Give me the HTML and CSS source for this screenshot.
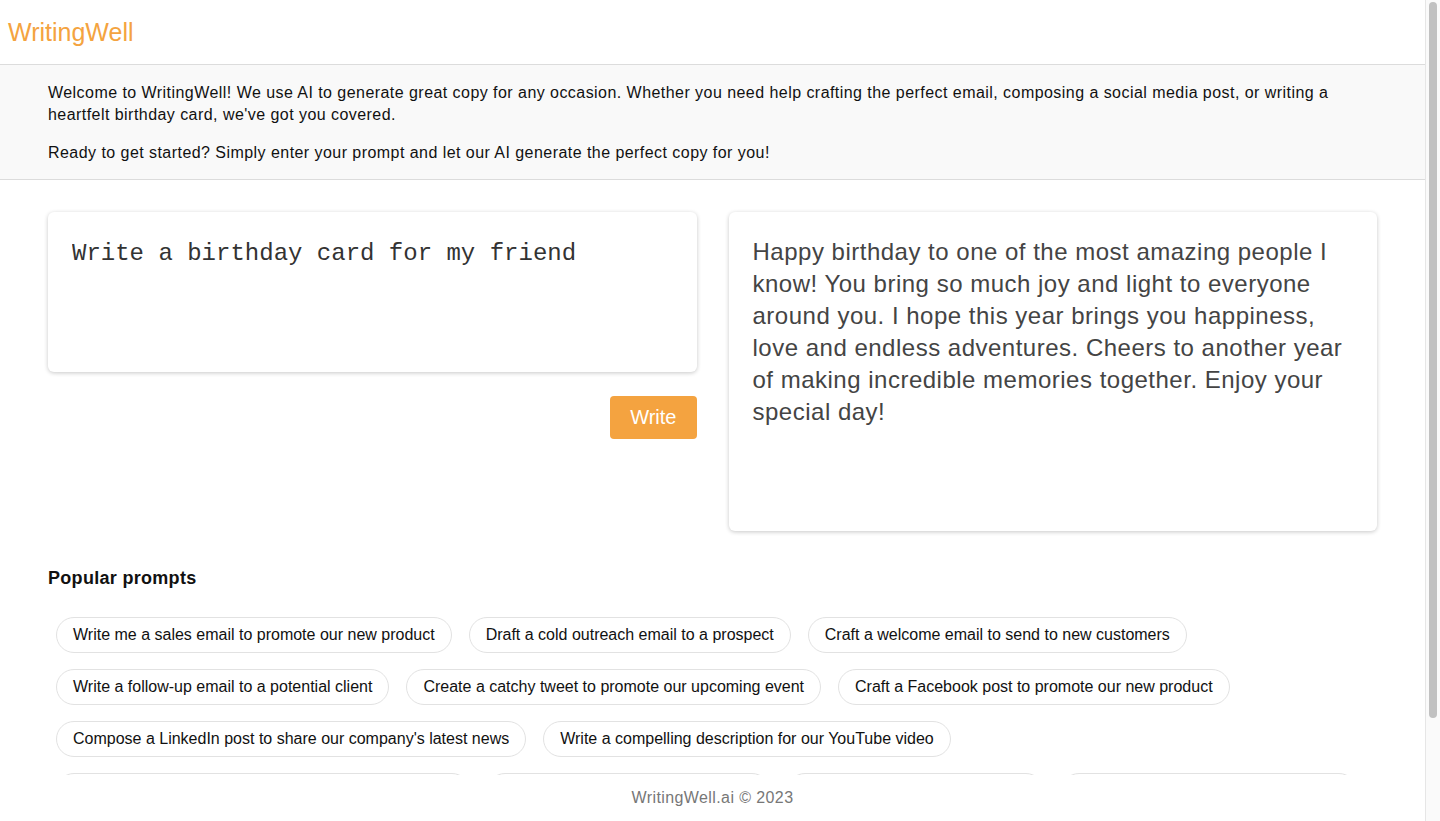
FILE: index.html
```html
<!DOCTYPE html>
<html lang="en">
<head>
<meta charset="utf-8">
<title>WritingWell</title>
<link rel="stylesheet" href="styles.css">
</head>
<body>
<div class="window">
  <div class="page">
    <header class="topbar">
      <div class="logo">WritingWell</div>
    </header>
    <section class="intro">
      <p>Welcome to WritingWell! We use AI to generate great copy for any occasion. Whether you need help crafting the perfect email, composing a social media post, or writing a heartfelt birthday card, we've got you covered.</p>
      <p>Ready to get started? Simply enter your prompt and let our AI generate the perfect copy for you!</p>
    </section>
    <main class="main">
      <div class="workspace">
        <div class="input-col">
          <div class="card input-card">
            <textarea class="prompt-input" spellcheck="false">Write a birthday card for my friend</textarea>
          </div>
          <div class="actions">
            <button class="write-btn">Write</button>
          </div>
        </div>
        <div class="card output-card">
          <p class="output-text">Happy birthday to one of the most amazing people I know! You bring so much joy and light to everyone around you. I hope this year brings you happiness, love and endless adventures. Cheers to another year of making incredible memories together. Enjoy your special day!</p>
        </div>
      </div>
      <section class="popular">
        <h2 class="popular-title">Popular prompts</h2>
        <div class="prompts">
          <button class="pill">Write me a sales email to promote our new product</button>
          <button class="pill">Draft a cold outreach email to a prospect</button>
          <button class="pill">Craft a welcome email to send to new customers</button>
          <button class="pill">Write a follow-up email to a potential client</button>
          <button class="pill">Create a catchy tweet to promote our upcoming event</button>
          <button class="pill">Craft a Facebook post to promote our new product</button>
          <button class="pill">Compose a LinkedIn post to share our company's latest news</button>
          <button class="pill">Write a compelling description for our YouTube video</button>
          <button class="pill">Write an engaging blog post about our industry trends</button>
          <button class="pill">Write a catchy slogan for our brand</button>
          <button class="pill">Draft a press release for events</button>
          <button class="pill">Write a thank you note to a customer</button>
          <button class="pill">Create an Instagram caption for our new product</button>
          <button class="pill">Write a persuasive landing page headline</button>
          <button class="pill">Draft a newsletter for our subscribers</button>
        </div>
      </section>
    </main>
    <footer class="footer">WritingWell.ai © 2023</footer>
  </div>
  <div class="scrollbar" aria-hidden="true">
    <div class="scrollbar-thumb"></div>
  </div>
</div>
</body>
</html>
```
FILE: styles.css
```css
html,
body {
  margin: 0;
  height: 100%;
  overflow: hidden;
  background: #fff;
}
body {
  font-family: "Liberation Sans", Arial, sans-serif;
  color: #111;
}
.window {
  display: flex;
  height: 100vh;
}
.page {
  flex: 1;
  min-width: 0;
  height: 100%;
  overflow-y: auto;
  scrollbar-width: none;
}
.page::-webkit-scrollbar {
  display: none;
}
.scrollbar {
  width: 15px;
  flex: none;
  box-sizing: border-box;
  background: #fafafa;
  border-left: 1px solid #e6e6e6;
  padding: 2px 3px 0 3px;
}
.scrollbar-thumb {
  width: 8px;
  height: 716px;
  background: #c1c1c1;
  border-radius: 4px;
}
.topbar {
  height: 64px;
  border-bottom: 1px solid #dcdcdc;
  display: flex;
  align-items: center;
  padding: 0 8px;
}
.logo {
  color: #f4a340;
  font-size: 25px;
  line-height: 28px;
}
.intro {
  background: #f9f9f9;
  border-bottom: 1px solid #dcdcdc;
  padding: 17px 48px 15px;
  font-size: 16px;
  line-height: 22px;
  letter-spacing: 0.45px;
  color: #111;
}
.intro p {
  margin: 0;
}
.intro p + p {
  margin-top: 16px;
}
.main {
  padding: 32px 48px 80px;
}
.workspace {
  display: grid;
  grid-template-columns: 1fr 1fr;
  gap: 32px;
  align-items: start;
}
.card {
  background: #fff;
  border-radius: 6px;
  box-shadow: 0 1px 4px rgba(0, 0, 0, 0.22);
}
.input-card {
  height: 160px;
  padding: 24px;
  box-sizing: border-box;
}
.prompt-input {
  display: block;
  width: 100%;
  height: 100%;
  border: none;
  outline: none;
  resize: none;
  padding: 0;
  margin: 0;
  font-family: "Liberation Mono", "Courier New", monospace;
  font-size: 24px;
  line-height: 35px;
  color: #333;
  background: transparent;
}
.actions {
  display: flex;
  justify-content: flex-end;
  margin-top: 24px;
}
.write-btn {
  background: #f4a340;
  color: #fff;
  border: none;
  border-radius: 4px;
  font-family: "Liberation Sans", Arial, sans-serif;
  font-size: 20px;
  line-height: 23px;
  padding: 10px 20px;
  cursor: pointer;
}
.output-card {
  height: 319px;
  padding: 24px;
  box-sizing: border-box;
}
.output-text {
  margin: 0;
  font-size: 24px;
  line-height: 32px;
  letter-spacing: 0.5px;
  color: #444;
}
.popular {
  margin-top: 36px;
}
.popular-title {
  margin: 0;
  font-size: 18px;
  line-height: 22px;
  letter-spacing: 0.3px;
  font-weight: bold;
  color: #111;
}
.prompts {
  display: flex;
  flex-wrap: wrap;
  gap: 16px 17px;
  padding: 28px 8px 0;
}
.pill {
  background: #fff;
  border: 1px solid #e2e2e2;
  border-radius: 18px;
  padding: 8px 16px;
  font-family: "Liberation Sans", Arial, sans-serif;
  font-size: 16px;
  line-height: 18px;
  color: #111;
  cursor: pointer;
}
.footer {
  position: fixed;
  left: 0;
  right: 15px;
  bottom: 0;
  height: 46px;
  background: #fff;
  display: flex;
  align-items: center;
  justify-content: center;
  font-size: 16px;
  letter-spacing: 0.4px;
  color: #777;
}
```
